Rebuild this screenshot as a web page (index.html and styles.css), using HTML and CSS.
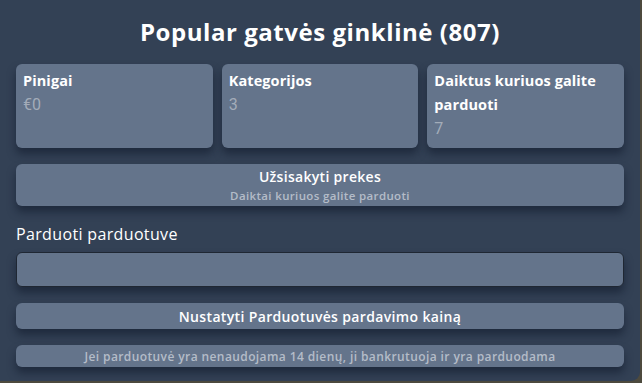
FILE: index.html
```html
<!DOCTYPE html>
<html lang="lt">
<head>
<meta charset="utf-8">
<link rel="stylesheet" href="styles.css">
</head>
<body>
<div class="panel">
  <h1 class="title">Popular gatvės ginklinė (807)</h1>
  <div class="stats">
    <div class="card">
      <div class="label">Pinigai</div>
      <div class="value">€0</div>
    </div>
    <div class="card">
      <div class="label">Kategorijos</div>
      <div class="value">3</div>
    </div>
    <div class="card">
      <div class="label">Daiktus kuriuos galite parduoti</div>
      <div class="value">7</div>
    </div>
  </div>
  <button class="btn btn-order">
    <span class="btn-title">Užsisakyti prekes</span>
    <span class="btn-sub">Daiktai kuriuos galite parduoti</span>
  </button>
  <div class="section-label">Parduoti parduotuve</div>
  <input class="field" type="text">
  <button class="btn btn-price">Nustatyti Parduotuvės pardavimo kainą</button>
  <div class="btn btn-note">Jei parduotuvė yra nenaudojama 14 dienų, ji bankrutuoja ir yra parduodama</div>
</div>
</body>
</html>
```
FILE: styles.css
```css
* { box-sizing: border-box; }
html, body { margin: 0; padding: 0; }
body {
  background: #4d4a3e;
  width: 642px;
  height: 383px;
  overflow: hidden;
  font-family: "Open Sans", "Liberation Sans", sans-serif;
}
.panel {
  width: 640px;
  height: 381px;
  background: #334155;
  border-radius: 0 0 9px 0;
  padding: 14px 16px 0 16px;
  display: flex;
  flex-direction: column;
}
.title {
  margin: 0;
  text-align: center;
  color: #fff;
  font-size: 24px;
  font-weight: 700;
  line-height: 36px;
  letter-spacing: 0.55px;
}
.stats {
  margin-top: 14px;
  display: grid;
  grid-template-columns: 1fr 1fr 1fr;
  gap: 9px;
}
.card {
  background: #64748b;
  border-radius: 6px;
  height: 84px;
  padding: 5px 7px;
  box-shadow: 0 6px 8px rgba(15, 23, 42, 0.55);
}
.label {
  color: #fff;
  font-weight: 700;
  font-size: 14.5px;
  line-height: 24px;
  letter-spacing: 0.1px;
}
.value {
  color: #a3acb9;
  font-family: "Roboto", "Liberation Sans", sans-serif;
  font-size: 16px;
  line-height: 24px;
}
.btn {
  display: flex;
  flex-direction: column;
  align-items: center;
  justify-content: center;
  width: 100%;
  border: none;
  background: #64748b;
  border-radius: 6px;
  box-shadow: 0 6px 8px rgba(15, 23, 42, 0.55);
  font-family: inherit;
  padding: 0;
}
.btn-order {
  margin-top: 16px;
  height: 42px;
  gap: 4px;
}
.btn-title {
  color: #fff;
  font-weight: 600;
  font-size: 14px;
  line-height: 16px;
  letter-spacing: 0.3px;
}
.btn-sub {
  color: #b4bcc8;
  font-weight: 600;
  font-size: 11.5px;
  line-height: 13px;
  letter-spacing: 0.35px;
}
.section-label {
  margin-top: 16px;
  color: #fff;
  font-size: 16px;
  line-height: 24px;
  letter-spacing: 0.35px;
}
.field {
  margin-top: 6px;
  height: 35px;
  width: 100%;
  background: #64748b;
  border: 1px solid #1f2733;
  border-radius: 6px;
  box-shadow: 0 6px 8px rgba(15, 23, 42, 0.55);
}
.btn-price {
  margin-top: 16px;
  height: 26px;
  color: #fff;
  font-weight: 600;
  font-size: 14px;
  letter-spacing: 0.35px;
}
.btn-note {
  margin-top: 16px;
  height: 22px;
  color: #b4bcc8;
  font-weight: 600;
  font-size: 12px;
  letter-spacing: 0.4px;
}
```
